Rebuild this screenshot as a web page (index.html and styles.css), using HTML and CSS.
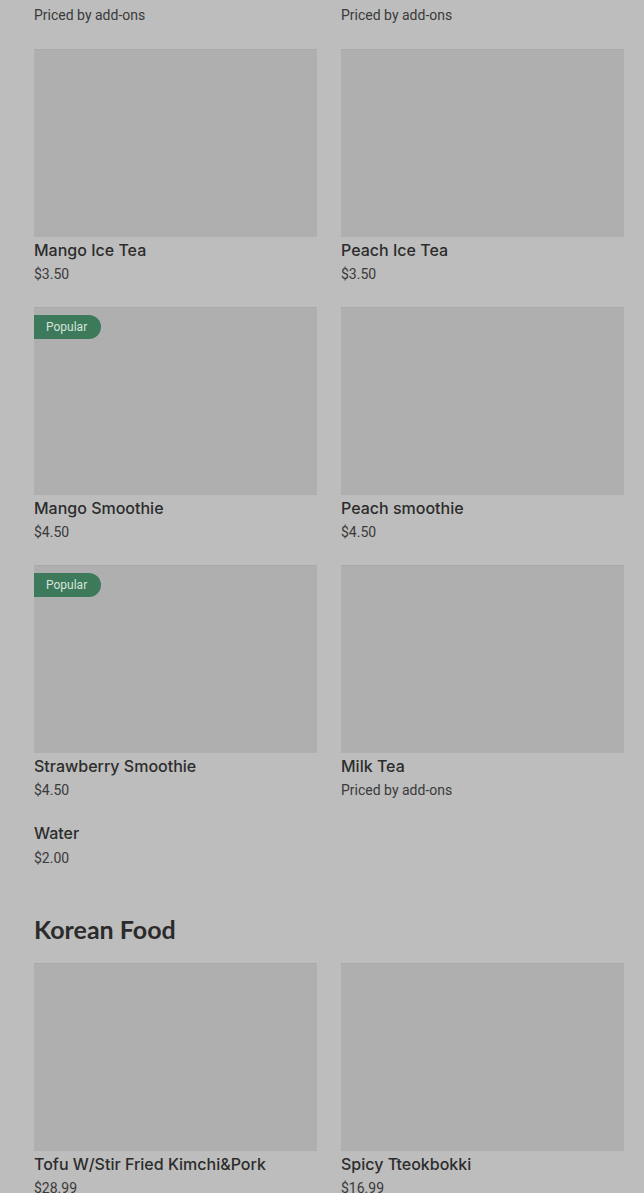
FILE: index.html
```html
<!DOCTYPE html>
<html lang="en">
<head>
  <meta charset="UTF-8" />
  <meta name="viewport" content="width=device-width, initial-scale=1.0"/>
  <title>Menu</title>
  <link rel="stylesheet" href="styles.css">
</head>
<body>
  <div class="menu">
    <div class="grid top">
      <div class="item"><p class="price">Priced by add-ons</p></div>
      <div class="item"><p class="price">Priced by add-ons</p></div>
    </div>

    <div class="grid">
      <div class="item">
        <div class="thumb"></div>
        <h4 class="name">Mango Ice Tea</h4>
        <p class="price">$3.50</p>
      </div>
      <div class="item">
        <div class="thumb"></div>
        <h4 class="name">Peach Ice Tea</h4>
        <p class="price">$3.50</p>
      </div>
      <div class="item">
        <div class="thumb"><span class="badge">Popular</span></div>
        <h4 class="name">Mango Smoothie</h4>
        <p class="price">$4.50</p>
      </div>
      <div class="item">
        <div class="thumb"></div>
        <h4 class="name">Peach smoothie</h4>
        <p class="price">$4.50</p>
      </div>
      <div class="item">
        <div class="thumb"><span class="badge">Popular</span></div>
        <h4 class="name">Strawberry Smoothie</h4>
        <p class="price">$4.50</p>
      </div>
      <div class="item">
        <div class="thumb"></div>
        <h4 class="name">Milk Tea</h4>
        <p class="price">Priced by add-ons</p>
      </div>
      <div class="item plain">
        <h4 class="name">Water</h4>
        <p class="price">$2.00</p>
      </div>
    </div>

    <h2 class="section">Korean Food</h2>
    <div class="grid">
      <div class="item">
        <div class="thumb"></div>
        <h4 class="name">Tofu W/Stir Fried Kimchi&amp;Pork</h4>
        <p class="price">$28.99</p>
      </div>
      <div class="item">
        <div class="thumb"></div>
        <h4 class="name">Spicy Tteokbokki</h4>
        <p class="price">$16.99</p>
      </div>
    </div>
  </div>
</body>
</html>
```

FILE: styles.css
```css
body {
  margin: 0;
  background: #bdbdbd;
  color: #2e2e2e;
  font-family: 'Inter', 'Roboto', sans-serif;
  overflow: hidden;
}
.menu {
  padding: 2px 20px 0 34px;
}
.grid {
  display: grid;
  grid-template-columns: 283px 283px;
  column-gap: 24px;
  row-gap: 24px;
}
.grid.top {
  margin-bottom: 25px;
}
.item {
  display: flex;
  flex-direction: column;
}
.thumb {
  position: relative;
  height: 188px;
  background: #afafaf;
  box-shadow: inset 0 1px 0 #a9a9a9;
  margin-bottom: 3px;
}
.badge {
  position: absolute;
  top: 8px;
  left: 0;
  height: 24px;
  line-height: 24px;
  padding: 0 14px 0 12px;
  background: #3d7a5b;
  color: #d7e3dc;
  font-family: 'Roboto', sans-serif;
  font-size: 12px;
  border-radius: 0 12px 12px 0;
}
.name {
  margin: 0;
  font-size: 16px;
  line-height: 20px;
  font-weight: 500;
  color: #2c2c2c;
}
.price {
  margin: 5px 0 0;
  font-family: 'Roboto', sans-serif;
  font-size: 14px;
  line-height: 18px;
  color: #3a3a3a;
}
.top .price {
  margin-top: 4px;
}
.plain .price {
  margin-top: 6px;
}
.section {
  margin: 46px 0 18px;
  font-family: 'Lato', sans-serif;
  font-size: 25px;
  line-height: 32px;
  font-weight: 700;
  color: #2b2b2b;
}
```
